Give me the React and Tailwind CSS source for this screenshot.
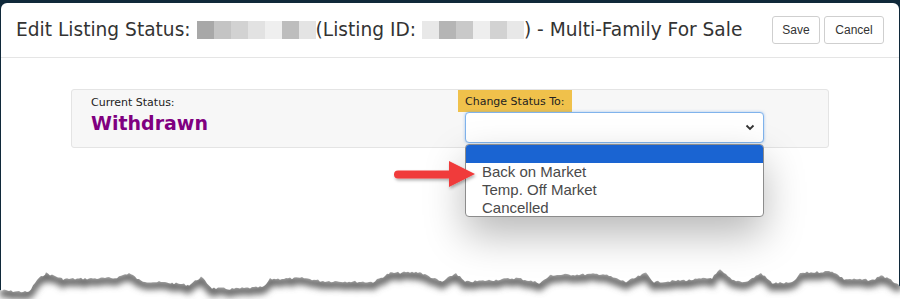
import React from 'react';

const nameBlocks = ['#a8a8a8', '#c4c4c4', '#d2d2d2', '#e2e2e2', '#efefef', '#bdbdbd', '#e4e4e4'];
const idBlocks = ['#e8e8e8', '#b5b5b5', '#c9c9c9', '#eeeeee', '#d2d2d2', '#e8e8e8'];

// rough key points of the torn paper edge
const keys = [
  [0, 290], [9, 291], [29, 292], [37, 280], [46, 273], [63, 279], [115, 278], [129, 273], [141, 281],
  [172, 283], [189, 285], [201, 277], [212, 288], [230, 289], [264, 287], [270, 279], [304, 278],
  [321, 281], [373, 282], [390, 273], [419, 272], [442, 282], [456, 273], [465, 282], [494, 280],
  [517, 278], [540, 283], [551, 275], [603, 274], [626, 282], [646, 273], [654, 282], [689, 280],
  [712, 278], [720, 270], [732, 280], [746, 282], [761, 273], [772, 283], [792, 283], [801, 273],
  [832, 271], [844, 279], [873, 280], [881, 275], [896, 283], [900, 287],
];

const tornPoints = (() => {
  const pts = [];
  let seed = 7;
  const rnd = () => {
    seed = (seed * 9301 + 49297) % 233280;
    return seed / 233280;
  };
  for (let i = 0; i < keys.length - 1; i++) {
    const [x1, y1] = keys[i];
    const [x2, y2] = keys[i + 1];
    for (let x = x1; x < x2; x += 2) {
      const t = (x - x1) / (x2 - x1);
      pts.push([x, y1 + (y2 - y1) * t + (rnd() - 0.5) * 2.2]);
    }
  }
  pts.push(keys[keys.length - 1]);
  return pts;
})();

const edgeLine = 'M' + tornPoints.map(([x, y]) => `${x},${y.toFixed(1)}`).join(' L');
const belowPath = edgeLine + ' L900,299 L0,299 Z';

const TornEdge = () => (
  <svg className="absolute left-0 top-0 pointer-events-none" width="900" height="299" viewBox="0 0 900 299">
    <defs>
      <clipPath id="below">
        <path d={belowPath} />
      </clipPath>
      <filter id="soft" x="-5%" y="-50%" width="110%" height="200%">
        <feGaussianBlur stdDeviation="3" />
      </filter>
    </defs>
    <path d={belowPath} fill="#ffffff" />
    <g clipPath="url(#below)">
      <path d={edgeLine} transform="translate(0,3)" stroke="#666" strokeWidth="8" fill="none" filter="url(#soft)" />
    </g>
  </svg>
);

const RedArrow = () => (
  <svg className="absolute left-[388px] top-[156px]" width="92" height="32" viewBox="0 0 92 32">
    <defs>
      <filter id="ash" x="-10%" y="-30%" width="120%" height="160%">
        <feDropShadow dx="1" dy="2" stdDeviation="1.5" floodColor="#000" floodOpacity="0.3" />
      </filter>
    </defs>
    <path
      d="M9,11.5 L60,11.5 L60,2 L86,15 L60,28 L60,19.5 L9,19.5 A4,4 0 0 1 9,11.5 Z"
      fill="#f03b3b"
      filter="url(#ash)"
    />
  </svg>
);

export default function App() {
  return (
    <div className="relative w-[900px] h-[299px] overflow-hidden bg-[#10293a] pt-[3px] px-[1px]" style={{ fontFamily: '"DejaVu Sans", Verdana, sans-serif' }}>
      <div className="relative h-[296px] bg-white rounded-t-[6px]">
        {/* header */}
        <div className="flex items-center justify-between h-[55px] pl-[15px] pr-[15px] border-b border-[#e5e5e5]">
          <h1 className="flex items-center text-[18.6px] text-[#333]">
            <span>Edit Listing Status:&nbsp;</span>
            <span className="flex h-[18px]">
              {nameBlocks.map((c, i) => (
                <span key={i} className="w-[17px] h-[18px]" style={{ background: c }} />
              ))}
            </span>
            <span>(Listing ID:&nbsp;</span>
            <span className="flex h-[18px]">
              {idBlocks.map((c, i) => (
                <span key={i} className="w-[17px] h-[18px]" style={{ background: c }} />
              ))}
            </span>
            <span>) - Multi-Family For Sale</span>
          </h1>
          <div className="flex gap-[4px] text-[12px] text-[#333]" style={{ fontFamily: '"Liberation Sans", Arial, sans-serif' }}>
            <button className="h-[28px] w-[48px] border border-[#cfcfcf] rounded-[3px] bg-white">Save</button>
            <button className="h-[28px] w-[60px] border border-[#cfcfcf] rounded-[3px] bg-white">Cancel</button>
          </div>
        </div>

        {/* body */}
        <div className="px-[70px] pt-[31px]">
          <div className="flex h-[59px] w-[758px] bg-[#f7f7f7] border border-[#e4e4e4] rounded-[3px]">
            <div className="w-[386px] pl-[19px] pt-[6px]">
              <div className="text-[11px] leading-[14px] text-[#222]">Current Status:</div>
              <div className="text-[19px] leading-[22px] font-bold text-[#800080] mt-[2px]">Withdrawn</div>
            </div>
            <div className="flex flex-col">
              <div className="w-[114px] h-[22px] bg-[#f0c14b] pl-[7px] pt-[5px] text-[11px] leading-[14px] text-[#222]">Change Status To:</div>
              <div className="ml-[7px] w-[299px] h-[31px] bg-white border border-[#80b3ec] rounded-[4px] shadow-[0_0_3px_rgba(80,150,230,0.5)] flex items-center justify-end pr-[8px]">
                <svg width="10" height="7" viewBox="0 0 10 7">
                  <path d="M1.5,1.5 L5,5 L8.5,1.5" stroke="#333" strokeWidth="1.8" fill="none" />
                </svg>
              </div>
            </div>
          </div>
        </div>

        {/* open dropdown */}
        <div
          className="absolute left-[464px] top-[141px] w-[299px] h-[73px] bg-white border border-[#8c8c8c] rounded-[4px] overflow-hidden shadow-[0_18px_40px_rgba(0,0,0,0.28)] text-[15px] leading-[18px] text-[#4a4a4a]"
          style={{ fontFamily: '"Liberation Sans", Arial, sans-serif' }}
        >
          <div className="h-[18px] bg-[#1a64d2]" />
          <div className="pl-[16px]">Back on Market</div>
          <div className="pl-[16px]">Temp. Off Market</div>
          <div className="pl-[16px]">Cancelled</div>
        </div>

        <RedArrow />
      </div>
      <TornEdge />
    </div>
  );
}
